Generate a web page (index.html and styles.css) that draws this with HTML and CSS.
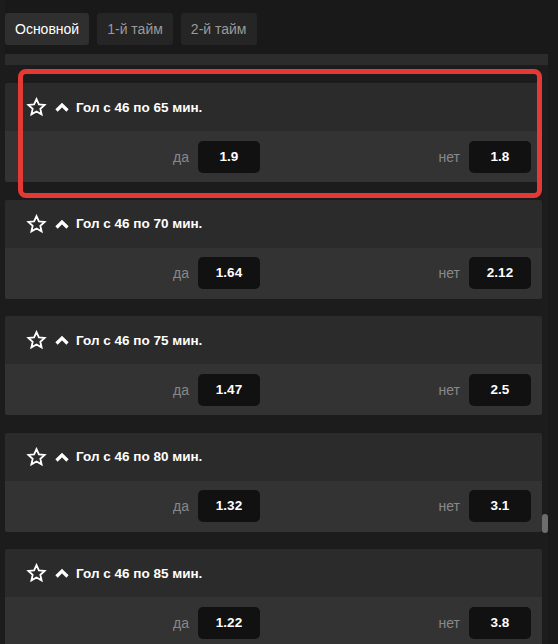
FILE: index.html
```html
<!DOCTYPE html>
<html lang="ru">
<head>
    <meta charset="UTF-8">
    <meta name="viewport" content="width=device-width, initial-scale=1.0">
    <title>Ставки на исход</title>
    <link rel="stylesheet" href="styles.css">
</head>
<body>
    <div class="page">
        <div class="main">
            <div class="tabs">
                <div class="tab active">Основной</div>
                <div class="tab">1-й тайм</div>
                <div class="tab">2-й тайм</div>
            </div>
            <div class="strip"></div>

            <div class="list">
                <div class="card">
                    <div class="card-head">
                        <svg class="star" viewBox="0 0 24 24" width="21" height="20"><path d="M12 2.5l2.9 6.3 6.8.7-5.1 4.6 1.5 6.8L12 17.4l-6.1 3.5 1.5-6.8-5.1-4.6 6.8-.7z" fill="none" stroke="#fff" stroke-width="2.2" stroke-linejoin="miter"/></svg>
                        <svg class="chevron" viewBox="0 0 14 10" width="14" height="10"><path d="M1.5 8.5L7 3l5.5 5.5" fill="none" stroke="#fff" stroke-width="3.2"/></svg>
                        <span class="title">Гол с 46 по 65 мин.</span>
                    </div>
                    <div class="card-row">
                        <div class="pick"><span class="label">да</span><span class="odd">1.9</span></div>
                        <div class="pick"><span class="label">нет</span><span class="odd">1.8</span></div>
                    </div>
                </div>

                <div class="card">
                    <div class="card-head">
                        <svg class="star" viewBox="0 0 24 24" width="21" height="20"><path d="M12 2.5l2.9 6.3 6.8.7-5.1 4.6 1.5 6.8L12 17.4l-6.1 3.5 1.5-6.8-5.1-4.6 6.8-.7z" fill="none" stroke="#fff" stroke-width="2.2" stroke-linejoin="miter"/></svg>
                        <svg class="chevron" viewBox="0 0 14 10" width="14" height="10"><path d="M1.5 8.5L7 3l5.5 5.5" fill="none" stroke="#fff" stroke-width="3.2"/></svg>
                        <span class="title">Гол с 46 по 70 мин.</span>
                    </div>
                    <div class="card-row">
                        <div class="pick"><span class="label">да</span><span class="odd">1.64</span></div>
                        <div class="pick"><span class="label">нет</span><span class="odd">2.12</span></div>
                    </div>
                </div>

                <div class="card">
                    <div class="card-head">
                        <svg class="star" viewBox="0 0 24 24" width="21" height="20"><path d="M12 2.5l2.9 6.3 6.8.7-5.1 4.6 1.5 6.8L12 17.4l-6.1 3.5 1.5-6.8-5.1-4.6 6.8-.7z" fill="none" stroke="#fff" stroke-width="2.2" stroke-linejoin="miter"/></svg>
                        <svg class="chevron" viewBox="0 0 14 10" width="14" height="10"><path d="M1.5 8.5L7 3l5.5 5.5" fill="none" stroke="#fff" stroke-width="3.2"/></svg>
                        <span class="title">Гол с 46 по 75 мин.</span>
                    </div>
                    <div class="card-row">
                        <div class="pick"><span class="label">да</span><span class="odd">1.47</span></div>
                        <div class="pick"><span class="label">нет</span><span class="odd">2.5</span></div>
                    </div>
                </div>

                <div class="card">
                    <div class="card-head">
                        <svg class="star" viewBox="0 0 24 24" width="21" height="20"><path d="M12 2.5l2.9 6.3 6.8.7-5.1 4.6 1.5 6.8L12 17.4l-6.1 3.5 1.5-6.8-5.1-4.6 6.8-.7z" fill="none" stroke="#fff" stroke-width="2.2" stroke-linejoin="miter"/></svg>
                        <svg class="chevron" viewBox="0 0 14 10" width="14" height="10"><path d="M1.5 8.5L7 3l5.5 5.5" fill="none" stroke="#fff" stroke-width="3.2"/></svg>
                        <span class="title">Гол с 46 по 80 мин.</span>
                    </div>
                    <div class="card-row">
                        <div class="pick"><span class="label">да</span><span class="odd">1.32</span></div>
                        <div class="pick"><span class="label">нет</span><span class="odd">3.1</span></div>
                    </div>
                </div>

                <div class="card">
                    <div class="card-head">
                        <svg class="star" viewBox="0 0 24 24" width="21" height="20"><path d="M12 2.5l2.9 6.3 6.8.7-5.1 4.6 1.5 6.8L12 17.4l-6.1 3.5 1.5-6.8-5.1-4.6 6.8-.7z" fill="none" stroke="#fff" stroke-width="2.2" stroke-linejoin="miter"/></svg>
                        <svg class="chevron" viewBox="0 0 14 10" width="14" height="10"><path d="M1.5 8.5L7 3l5.5 5.5" fill="none" stroke="#fff" stroke-width="3.2"/></svg>
                        <span class="title">Гол с 46 по 85 мин.</span>
                    </div>
                    <div class="card-row">
                        <div class="pick"><span class="label">да</span><span class="odd">1.22</span></div>
                        <div class="pick"><span class="label">нет</span><span class="odd">3.8</span></div>
                    </div>
                </div>

                <!-- fake scrollbar thumb -->
                <div class="thumb"></div>
            </div>
        </div>
        <div class="side"></div>
    </div>

    <!-- highlight around the first market -->
    <div class="highlight"></div>
</body>
</html>
```

FILE: styles.css
```css
* {
    margin: 0;
    padding: 0;
    box-sizing: border-box;
}

body {
    font-family: 'Liberation Sans', Arial, sans-serif;
    background: #1c1c1c;
    height: 644px;
    overflow: hidden;
    position: relative;
}

.page {
    display: flex;
    height: 100%;
}

.main {
    margin-left: 5px;
    width: 543px;
}

.side {
    flex: 1;
    background: #191919;
}

.tabs {
    display: flex;
    gap: 8px;
    height: 54px;
    padding-top: 13px;
    background: #191919;
}

.tab {
    height: 32px;
    padding: 0 10px;
    line-height: 32px;
    font-size: 14px;
    color: #9a9a9a;
    background: #252525;
    border-radius: 3px;
}

.tab.active {
    color: #fff;
    background: #2f2f2f;
}

.strip {
    height: 11px;
    background: #2c2c2c;
}

.list {
    position: relative;
    display: flex;
    flex-direction: column;
    gap: 17.5px;
    padding: 18px 6px 0 0;
}

.card {
    border-radius: 2px;
    overflow: hidden;
}

.card-head {
    display: flex;
    align-items: center;
    height: 48px;
    padding-left: 21px;
    background: #2b2b2b;
}

.star {
    margin-right: 8px;
}

.chevron {
    margin-right: 7px;
}

.title {
    font-size: 13.5px;
    font-weight: bold;
    color: #fff;
}

.card-row {
    display: grid;
    grid-template-columns: 1fr 1fr;
    gap: 27px;
    height: 51px;
    padding: 0 11px;
    background: #333;
}

.pick {
    display: flex;
    align-items: center;
    justify-content: flex-end;
    gap: 9px;
}

.label {
    font-size: 14px;
    color: #888;
}

.odd {
    width: 62px;
    height: 32px;
    line-height: 32px;
    text-align: center;
    font-size: 13.5px;
    font-weight: bold;
    color: #fff;
    background: #111;
    border-radius: 5px;
}

.thumb {
    position: absolute;
    right: 0;
    top: 449px;
    width: 6px;
    height: 19px;
    background: #6d6d6d;
    border-radius: 3px;
}

.highlight {
    position: absolute;
    left: 18px;
    top: 69px;
    width: 524px;
    height: 129px;
    border: 5px solid #e53935;
    border-radius: 8px;
}
```
